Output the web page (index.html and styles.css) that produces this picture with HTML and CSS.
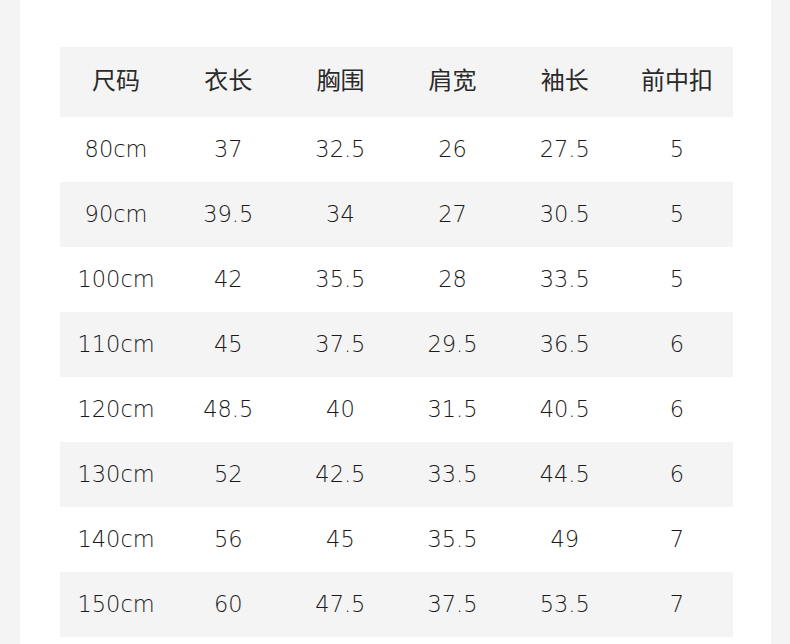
FILE: index.html
```html
<!DOCTYPE html>
<html lang="zh">
<head>
<meta charset="utf-8">
<link rel="stylesheet" href="styles.css">
</head>
<body>
<div class="page">
  <table class="size-table">
    <thead>
      <tr><th>尺码</th><th>衣长</th><th>胸围</th><th>肩宽</th><th>袖长</th><th>前中扣</th></tr>
    </thead>
    <tbody>
      <tr><td>80cm</td><td>37</td><td>32.5</td><td>26</td><td>27.5</td><td>5</td></tr>
      <tr><td>90cm</td><td>39.5</td><td>34</td><td>27</td><td>30.5</td><td>5</td></tr>
      <tr><td>100cm</td><td>42</td><td>35.5</td><td>28</td><td>33.5</td><td>5</td></tr>
      <tr><td>110cm</td><td>45</td><td>37.5</td><td>29.5</td><td>36.5</td><td>6</td></tr>
      <tr><td>120cm</td><td>48.5</td><td>40</td><td>31.5</td><td>40.5</td><td>6</td></tr>
      <tr><td>130cm</td><td>52</td><td>42.5</td><td>33.5</td><td>44.5</td><td>6</td></tr>
      <tr><td>140cm</td><td>56</td><td>45</td><td>35.5</td><td>49</td><td>7</td></tr>
      <tr><td>150cm</td><td>60</td><td>47.5</td><td>37.5</td><td>53.5</td><td>7</td></tr>
    </tbody>
  </table>
</div>
</body>
</html>
```
FILE: styles.css
```css
html, body {
  margin: 0;
  padding: 0;
  background: #f4f4f4;
  height: 644px;
  overflow: hidden;
}
.page {
  margin: 0 19px 0 20px;
  background: #ffffff;
  height: 644px;
  padding: 47px 0 0 40px;
  box-sizing: border-box;
}
.size-table {
  width: 673px;
  border-collapse: collapse;
  table-layout: fixed;
  color: #222222;
}
.size-table th {
  height: 70px;
  padding: 0 0 8px 0;
  box-sizing: border-box;
  font-family: "Noto Sans CJK SC", sans-serif;
  font-weight: 400;
  font-size: 24px;
  color: #2a2a2a;
  background: #f4f4f4;
  text-align: center;
  vertical-align: middle;
}
.size-table td {
  height: 65px;
  padding: 0 0 2px 0;
  box-sizing: border-box;
  font-family: "DejaVu Sans", sans-serif;
  font-weight: 300;
  font-size: 22.5px;
  color: #1a1a1a;
  text-align: center;
  vertical-align: middle;
}
.size-table tbody tr:nth-child(even) td {
  background: #f4f4f4;
}
```
